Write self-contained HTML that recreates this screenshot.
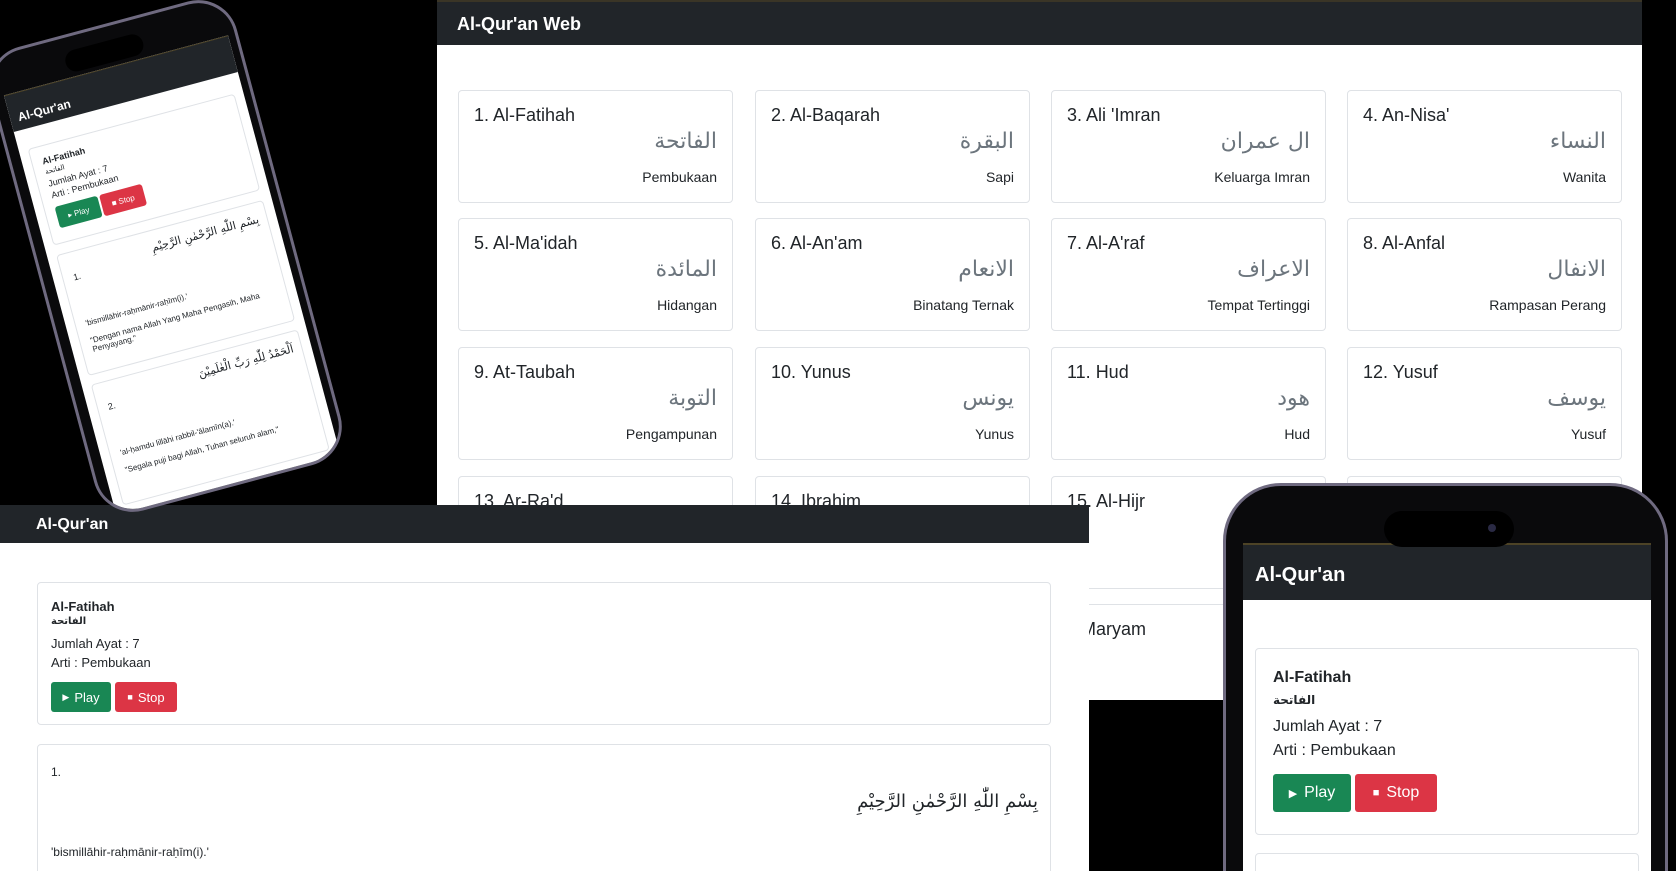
<!DOCTYPE html>
<html style="width:1676px;height:871px;overflow:hidden"><head><meta charset="utf-8"><style>
*{box-sizing:border-box;margin:0;padding:0}
body{width:1676px;height:871px;background:#000;position:relative;overflow:hidden;font-family:"Liberation Sans","DejaVu Sans",sans-serif;color:#212529}
.abs{position:absolute}
.web{left:437px;top:0;width:1205px;height:700px;background:#fff;overflow:hidden}
.nav{background:#212529;color:#fff}
.card{position:absolute;border:1px solid #dfe2e6;border-radius:4px;background:#fff}
.c .t{position:absolute;left:15px;top:14px;font-size:18px}
.c .a{position:absolute;right:15px;top:38px;font-size:22px;color:#6c757d;font-family:"DejaVu Sans",sans-serif}
.c .m{position:absolute;right:15px;top:78px;font-size:14px}
.btn{position:absolute;color:#fff;border-radius:3px;display:flex;align-items:center;justify-content:center}
.g{background:#198754}.r{background:#dc3545}
.phone{position:absolute;background:#0a0a0c;border:3px solid #6f6a80;border-radius:58px}
</style></head><body>

<div class="abs web">
 <div class="nav abs" style="left:0;top:0;width:1205px;height:45px;border-top:2px solid #3a3526"><div class="abs" style="left:20px;top:12px;font-size:18px;font-weight:bold">Al-Qur'an Web</div></div>
 <div class="card c" style="left:21px;top:90px;width:275px;height:113px"><div class="t">1. Al-Fatihah</div><div class="a">الفاتحة</div><div class="m">Pembukaan</div></div>
 <div class="card c" style="left:318px;top:90px;width:275px;height:113px"><div class="t">2. Al-Baqarah</div><div class="a">البقرة</div><div class="m">Sapi</div></div>
 <div class="card c" style="left:614px;top:90px;width:275px;height:113px"><div class="t">3. Ali 'Imran</div><div class="a">ال عمران</div><div class="m">Keluarga Imran</div></div>
 <div class="card c" style="left:910px;top:90px;width:275px;height:113px"><div class="t">4. An-Nisa'</div><div class="a">النساء</div><div class="m">Wanita</div></div>
 <div class="card c" style="left:21px;top:218px;width:275px;height:113px"><div class="t">5. Al-Ma'idah</div><div class="a">المائدة</div><div class="m">Hidangan</div></div>
 <div class="card c" style="left:318px;top:218px;width:275px;height:113px"><div class="t">6. Al-An'am</div><div class="a">الانعام</div><div class="m">Binatang Ternak</div></div>
 <div class="card c" style="left:614px;top:218px;width:275px;height:113px"><div class="t">7. Al-A'raf</div><div class="a">الاعراف</div><div class="m">Tempat Tertinggi</div></div>
 <div class="card c" style="left:910px;top:218px;width:275px;height:113px"><div class="t">8. Al-Anfal</div><div class="a">الانفال</div><div class="m">Rampasan Perang</div></div>
 <div class="card c" style="left:21px;top:347px;width:275px;height:113px"><div class="t">9. At-Taubah</div><div class="a">التوبة</div><div class="m">Pengampunan</div></div>
 <div class="card c" style="left:318px;top:347px;width:275px;height:113px"><div class="t">10. Yunus</div><div class="a">يونس</div><div class="m">Yunus</div></div>
 <div class="card c" style="left:614px;top:347px;width:275px;height:113px"><div class="t">11. Hud</div><div class="a">هود</div><div class="m">Hud</div></div>
 <div class="card c" style="left:910px;top:347px;width:275px;height:113px"><div class="t">12. Yusuf</div><div class="a">يوسف</div><div class="m">Yusuf</div></div>
 <div class="card c" style="left:21px;top:476px;width:275px;height:113px"><div class="t">13. Ar-Ra'd</div></div>
 <div class="card c" style="left:318px;top:476px;width:275px;height:113px"><div class="t">14. Ibrahim</div></div>
 <div class="card c" style="left:614px;top:476px;width:275px;height:113px"><div class="t">15. Al-Hijr</div></div>
 <div class="card c" style="left:910px;top:476px;width:275px;height:113px"></div>
 <div class="card c" style="left:614px;top:604px;width:275px;height:113px"><div class="t" style="left:-1px">19. Maryam</div></div>
</div>

<div class="abs" style="left:0;top:505px;width:1089px;height:366px;background:#fff;overflow:hidden">
 <div class="nav abs" style="left:0;top:0;width:1089px;height:38px"><div class="abs" style="left:36px;top:11px;font-size:16px;font-weight:bold">Al-Qur'an</div></div>
 <div class="card" style="left:37px;top:77px;width:1014px;height:143px;font-size:13px">
  <div class="abs" style="left:13px;top:16px;font-weight:bold">Al-Fatihah</div>
  <div class="abs" style="left:13px;top:33px;font-size:10px;font-weight:bold;font-family:'DejaVu Sans',sans-serif">الفاتحة</div>
  <div class="abs" style="left:13px;top:53px">Jumlah Ayat : 7</div>
  <div class="abs" style="left:13px;top:72px">Arti : Pembukaan</div>
  <div class="btn g" style="left:13px;top:99px;width:60px;height:30px;font-size:13px"><span style="font-size:9px;margin-right:5px">▶</span>Play</div>
  <div class="btn r" style="left:77px;top:99px;width:62px;height:30px;font-size:13px"><span style="font-size:9px;margin-right:5px">■</span>Stop</div>
 </div>
 <div class="card" style="left:37px;top:239px;width:1014px;height:200px;font-size:12px">
  <div class="abs" style="left:13px;top:20px">1.</div>
  <div class="abs" style="right:12px;top:46px;font-size:18px;font-family:'DejaVu Sans',sans-serif">بِسْمِ اللّٰهِ الرَّحْمٰنِ الرَّحِيْمِ</div>
  <div class="abs" style="left:13px;top:100px">'bismillāhir-raḥmānir-raḥīm(i).'</div>
 </div>
</div>

<div class="phone" style="left:1223px;top:483px;width:445px;height:388px;overflow:hidden;border-bottom:none;border-radius:58px 58px 0 0">
 <div class="abs" style="left:17px;top:57px;width:408px;height:340px;background:#fff;overflow:hidden">
  <div class="abs" style="left:0;top:0;width:408px;height:57px;background:#212529;border-top:2px solid #4d4326"></div>
  <div class="abs" style="left:12px;top:21px;color:#fff;font-size:20px;font-weight:bold">Al-Qur'an</div>
  <div class="card" style="left:12px;top:105px;width:384px;height:187px;font-size:16px">
   <div class="abs" style="left:17px;top:20px;font-weight:bold">Al-Fatihah</div>
   <div class="abs" style="left:17px;top:44px;font-size:12px;font-weight:bold;font-family:'DejaVu Sans',sans-serif">الفاتحة</div>
   <div class="abs" style="left:17px;top:69px">Jumlah Ayat : 7</div>
   <div class="abs" style="left:17px;top:93px">Arti : Pembukaan</div>
   <div class="btn g" style="left:17px;top:125px;width:78px;height:38px;font-size:16px"><span style="font-size:11px;margin-right:7px">▶</span>Play</div>
   <div class="btn r" style="left:99px;top:125px;width:82px;height:38px;font-size:16px"><span style="font-size:11px;margin-right:7px">■</span>Stop</div>
  </div>
  <div class="card" style="left:12px;top:310px;width:384px;height:100px"></div>
 </div>
 <div class="abs" style="left:158px;top:25px;width:130px;height:36px;background:#000;border-radius:18px"></div>
 <div class="abs" style="left:262px;top:38px;width:8px;height:8px;background:#2a2a44;border-radius:50%"></div>
</div>

<div class="phone" style="left:38px;top:16px;width:255px;height:480px;border-radius:40px;transform:rotate(-15deg);overflow:hidden">
 <div class="abs" style="left:10px;top:40px;width:232px;height:440px;background:#fff;overflow:hidden;font-size:9px">
  <div class="abs" style="left:0;top:0;width:232px;height:38px;background:#212529;border-top:1px solid #4d4326"></div>
  <div class="abs" style="left:8px;top:18px;color:#fff;font-size:12px;font-weight:bold">Al-Qur'an</div>
  <div class="card" style="left:9px;top:58px;width:214px;height:100px">
   <div class="abs" style="left:10px;top:10px;font-weight:bold">Al-Fatihah</div>
   <div class="abs" style="left:10px;top:22px;font-size:7px;font-family:'DejaVu Sans',sans-serif">الفاتحة</div>
   <div class="abs" style="left:10px;top:33px">Jumlah Ayat : 7</div>
   <div class="abs" style="left:10px;top:45px">Arti : Pembukaan</div>
   <div class="btn g" style="left:10px;top:62px;width:44px;height:22px;font-size:8px">▸ Play</div>
   <div class="btn r" style="left:56px;top:62px;width:44px;height:22px;font-size:8px">■ Stop</div>
  </div>
  <div class="card" style="left:9px;top:168px;width:214px;height:125px">
   <div class="abs" style="left:10px;top:20px">1.</div>
   <div class="abs" style="right:8px;top:10px;font-size:11px;font-family:'DejaVu Sans',sans-serif">بِسْمِ اللّٰهِ الرَّحْمٰنِ الرَّحِيْمِ</div>
   <div class="abs" style="left:10px;top:68px;font-size:8px">'bismillāhir-raḥmānir-raḥīm(i).'</div>
   <div class="abs" style="left:10px;top:86px;font-size:8px;width:190px">"Dengan nama Allah Yang Maha Pengasih, Maha Penyayang."</div>
  </div>
  <div class="card" style="left:9px;top:302px;width:214px;height:125px">
   <div class="abs" style="left:10px;top:20px">2.</div>
   <div class="abs" style="right:8px;top:10px;font-size:11px;font-family:'DejaVu Sans',sans-serif">اَلْحَمْدُ لِلّٰهِ رَبِّ الْعٰلَمِيْنَ</div>
   <div class="abs" style="left:10px;top:68px;font-size:8px">'al-ḥamdu lillāhi rabbil-'ālamīn(a).'</div>
   <div class="abs" style="left:10px;top:86px;font-size:8px">"Segala puji bagi Allah, Tuhan seluruh alam,"</div>
  </div>
 </div>
 <div class="abs" style="left:78px;top:14px;width:80px;height:22px;background:#000;border-radius:11px"></div>
</div>

</body></html>
